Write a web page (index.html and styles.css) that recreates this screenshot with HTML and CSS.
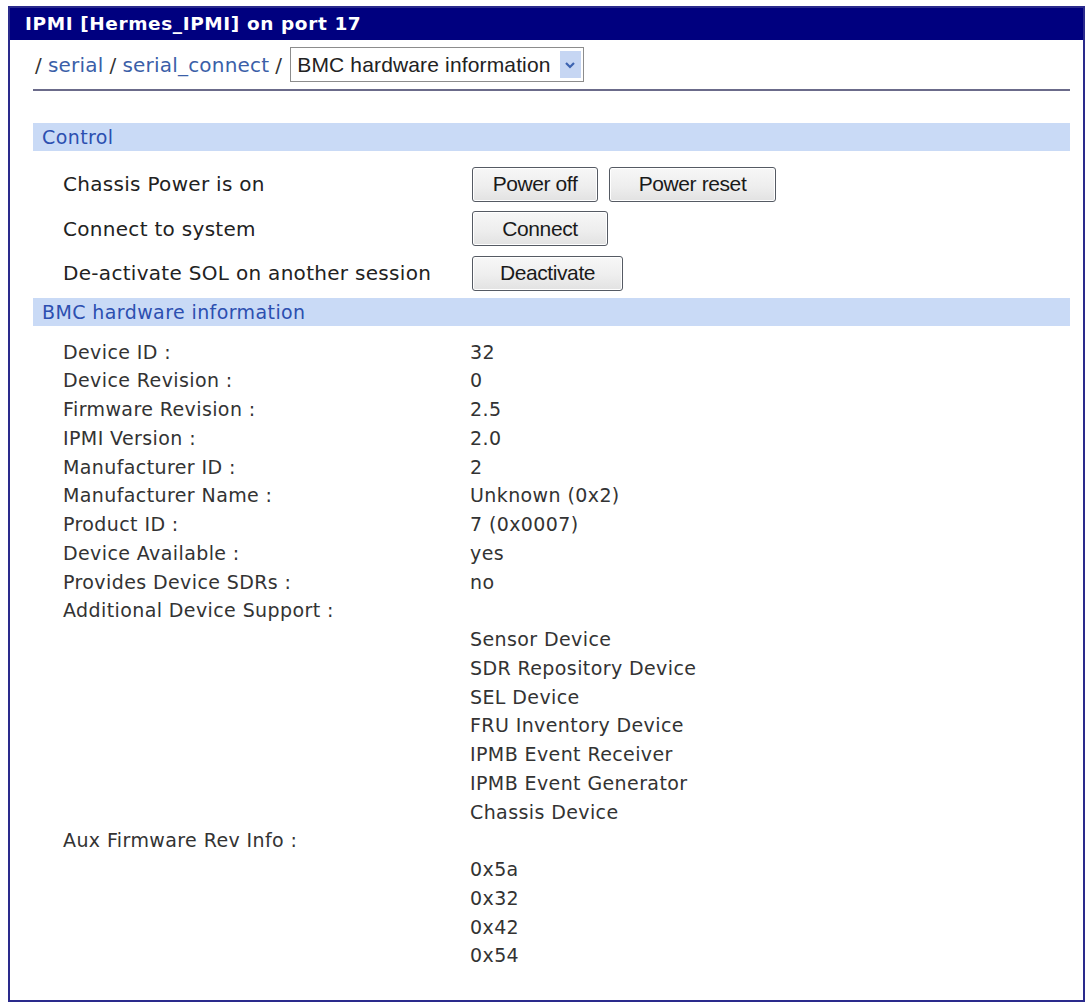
FILE: index.html
```html
<!DOCTYPE html>
<html>
<head>
    <title>IPMI [Hermes_IPMI] on port 17</title>
    <link rel="stylesheet" href="styles.css">
</head>
<body>
    <div class="panel">
        <div class="panel-title">IPMI [Hermes_IPMI] on port 17</div>

        <div class="panel-body">
            <!-- Breadcrumb path with view selector -->
            <div class="crumbs">
                / <a href="#">serial</a> / <a href="#">serial_connect</a> /
                <span class="view-select">
                    <span class="view-text">BMC hardware information</span>
                    <span class="view-arrow">
                        <svg width="12" height="8" viewBox="0 0 12 8"><path d="M2 2 L6 6 L10 2" fill="none" stroke="#3d63b0" stroke-width="2.2"/></svg>
                    </span>
                </span>
            </div>
            <hr class="crumb-rule">

            <!-- Control section -->
            <div class="section-head">Control</div>
            <div class="control-list">
                <div class="control-row">
                    <div class="label">Chassis Power is on</div>
                    <div class="actions">
                        <button class="btn btn-off">Power off</button>
                        <button class="btn btn-reset">Power reset</button>
                    </div>
                </div>
                <div class="control-row">
                    <div class="label">Connect to system</div>
                    <div class="actions">
                        <button class="btn btn-connect">Connect</button>
                    </div>
                </div>
                <div class="control-row">
                    <div class="label">De-activate SOL on another session</div>
                    <div class="actions">
                        <button class="btn btn-deact">Deactivate</button>
                    </div>
                </div>
            </div>

            <!-- BMC info section -->
            <div class="section-head">BMC hardware information</div>
            <div class="info">
                <div class="key">Device ID :</div><div class="val">32</div>
                <div class="key">Device Revision :</div><div class="val">0</div>
                <div class="key">Firmware Revision :</div><div class="val">2.5</div>
                <div class="key">IPMI Version :</div><div class="val">2.0</div>
                <div class="key">Manufacturer ID :</div><div class="val">2</div>
                <div class="key">Manufacturer Name :</div><div class="val">Unknown (0x2)</div>
                <div class="key">Product ID :</div><div class="val">7 (0x0007)</div>
                <div class="key">Device Available :</div><div class="val">yes</div>
                <div class="key">Provides Device SDRs :</div><div class="val">no</div>
                <div class="key">Additional Device Support :</div><div class="val"></div>
                <div class="key"></div><div class="val">Sensor Device</div>
                <div class="key"></div><div class="val">SDR Repository Device</div>
                <div class="key"></div><div class="val">SEL Device</div>
                <div class="key"></div><div class="val">FRU Inventory Device</div>
                <div class="key"></div><div class="val">IPMB Event Receiver</div>
                <div class="key"></div><div class="val">IPMB Event Generator</div>
                <div class="key"></div><div class="val">Chassis Device</div>
                <div class="key">Aux Firmware Rev Info :</div><div class="val"></div>
                <div class="key"></div><div class="val">0x5a</div>
                <div class="key"></div><div class="val">0x32</div>
                <div class="key"></div><div class="val">0x42</div>
                <div class="key"></div><div class="val">0x54</div>
            </div>
        </div>
    </div>
</body>
</html>
```

FILE: styles.css
```css
/* Page */
body {
    margin: 0;
    padding: 6px 5px 4px 8px;
    background-color: #fff;
    font-family: "DejaVu Sans", Verdana, sans-serif;
    color: #333;
}

/* Outer window */
.panel {
    border: 2px solid #2a2a8c;
    height: 996px;
    box-sizing: border-box;
}

.panel-title {
    background-color: #00007f;
    color: #fff;
    font-weight: bold;
    font-size: 18.5px;
    letter-spacing: 0.6px;
    height: 32px;
    line-height: 31px;
    padding-left: 15px;
}

.panel-body {
    padding: 0 13px 0 23px;
}

/* Breadcrumb */
.crumbs {
    display: flex;
    align-items: center;
    gap: 6px;
    font-size: 20px;
    letter-spacing: 0.2px;
    color: #333;
    margin-top: 7px;
    height: 35px;
    padding-left: 2px;
}

.crumbs a {
    color: #3b5fa8;
    text-decoration: none;
}

.view-select {
    display: flex;
    align-items: center;
    border: 1px solid #8c8c8c;
    height: 35px;
    box-sizing: border-box;
    padding-left: 6px;
    margin-left: 2px;
    font-family: "Liberation Sans", Arial, sans-serif;
    font-size: 21px;
    letter-spacing: 0.15px;
    color: #222;
}

.view-text {
    padding-right: 9px;
}

.view-arrow {
    width: 21px;
    height: 27px;
    margin-right: 2px;
    background-color: #c6d6f3;
    display: flex;
    align-items: center;
    justify-content: center;
}

.crumb-rule {
    border: none;
    border-top: 2px solid #6b6b8a;
    margin: 7px 0 32px 0;
}

/* Section headers */
.section-head {
    background-color: #c9daf6;
    color: #2c4fb0;
    font-size: 19px;
    letter-spacing: 0.4px;
    height: 28px;
    line-height: 28px;
    padding-left: 9px;
}

/* Control rows */
.control-list {
    padding: 11px 0 2.5px 0;
}

.control-row {
    display: flex;
    align-items: center;
    height: 44.5px;
    padding-left: 30px;
    font-size: 20px;
    letter-spacing: 0.3px;
    color: #222;
}

.label {
    width: 409px;
}

.actions {
    display: flex;
    gap: 11px;
}

.btn {
    font-family: "Liberation Sans", Arial, sans-serif;
    font-size: 21px;
    letter-spacing: -0.4px;
    color: #1a1a1a;
    height: 35px;
    padding: 0;
    border: 1.5px solid #555a63;
    border-radius: 3px;
    background: linear-gradient(#f7f7f7, #eeeeee 55%, #e2e2e2);
    box-shadow: inset 0 0 0 1px #fff;
}

.btn-off { width: 126px; }
.btn-reset { width: 167px; }
.btn-connect { width: 136px; }
.btn-deact { width: 151px; }

/* Info grid */
.info {
    display: grid;
    grid-template-columns: 407px 1fr;
    grid-auto-rows: 28.76px;
    padding: 11.6px 0 0 30px;
    font-size: 19px;
    letter-spacing: 0.4px;
    color: #333;
}

.info .key,
.info .val {
    line-height: 28.76px;
    white-space: nowrap;
}
```
